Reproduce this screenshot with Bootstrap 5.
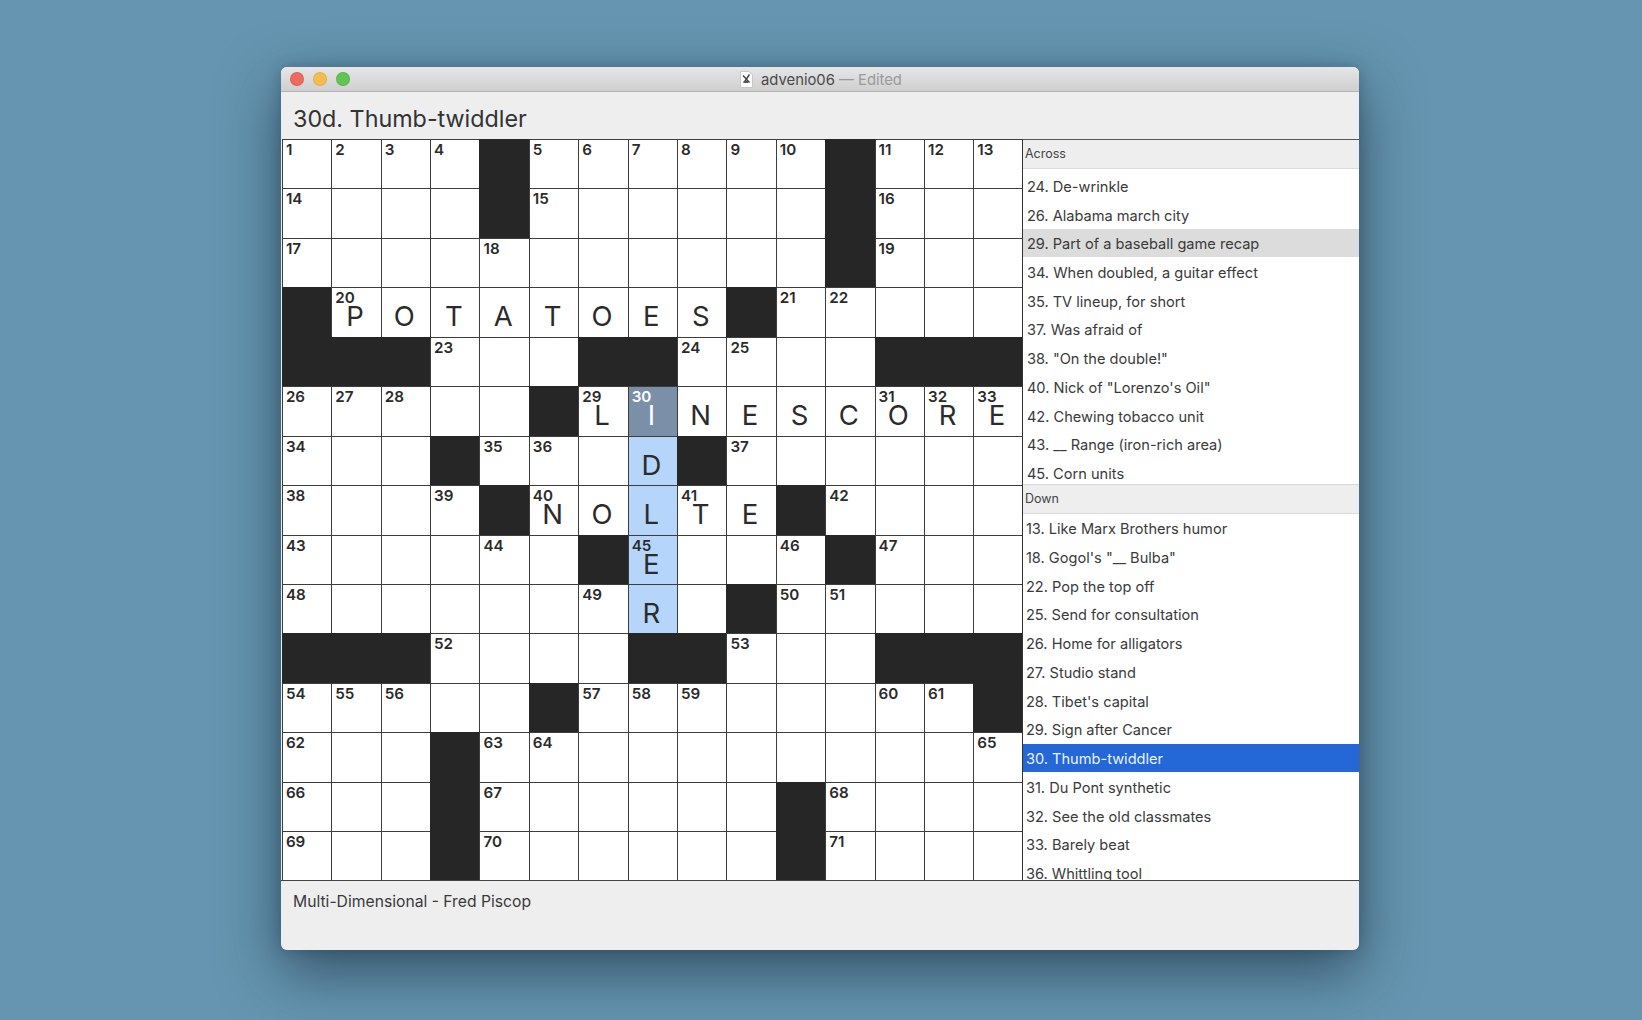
<!DOCTYPE html>
<html lang="en">

<head>
    <meta charset="UTF-8">
    <title>advenio06 - Edited</title>
    <link href="https://cdn.jsdelivr.net/npm/bootstrap@5.3.0/dist/css/bootstrap.min.css" rel="stylesheet">
    <style>
        body {
            background-color: #6595b0;
            height: 1020px;
            overflow: hidden;
            font-family: Inter, "Liberation Sans", sans-serif;
            color: #333;
            padding: 67px 283px 0 281px;
        }

        .app-window {
            height: 883px;
            background: #eeeeef;
            border-radius: 6px;
            overflow: hidden;
        }

        .window-frame {
            border-radius: 6px;
            box-shadow: 0 22px 60px rgba(20, 35, 50, 0.6), 0 0 14px rgba(20, 35, 50, 0.25);
        }

        .title-bar {
            height: 25px;
            padding: 1px 0 0 2px;
            background: linear-gradient(#e6e6e6, #cfcfcf);
            border-bottom: 1px solid #b4b4b4;
            font-size: 14.8px;
            line-height: 24px;
            color: #4a4a4a;
            flex: none;
        }

        .light {
            width: 14px;
            height: 14px;
            border-radius: 50%;
            border: 1px solid rgba(0, 0, 0, 0.08);
        }

        .light-red { background: #ee6a5f; }
        .light-yellow { background: #f5bd4f; }
        .light-green { background: #61c454; }

        .traffic {
            left: 9px;
            top: 5px;
            gap: 9px;
        }

        .edited { color: #9a9a9a; }

        .clue-title {
            height: 47px;
            padding: 10px 0 0 12px;
            font-size: 23.3px;
            line-height: 34px;
            color: #333;
            flex: none;
        }

        .main-area {
            height: 742px;
            border-bottom: 1px solid #444;
            flex: none;
            overflow: hidden;
        }

        .puzzle-grid {
            width: 740px;
            height: 741px;
            margin-left: 0.9px;
            display: grid;
            grid-template-columns: repeat(15, 49.4px);
            grid-template-rows: repeat(15, 49.45px);
            flex: none;
        }

        .cell {
            position: relative;
            min-width: 0;
            min-height: 0;
            border-left: 1px solid #3d3d3d;
            border-top: 1px solid #3d3d3d;
            background: #fff;
            text-align: center;
            font-size: 27.5px;
            line-height: 48px;
            padding: 4px 3px 0 0;
            color: #2b2b2b;
        }

        .cell-black { background: #262626; border-color: #262626; }
        .cell-word { background: #b5d5fb; }
        .cell-active { background: #7b8fa8; color: #fff; }

        .cell-num {
            position: absolute;
            left: 3px;
            top: 0;
            font-size: 15.2px;
            line-height: 20px;
            font-weight: 600;
            color: #2b2b2b;
        }

        .cell-active .cell-num { color: #fff; }

        .side-panel {
            position: relative;
            width: 337px;
            flex: none;
            background: #fff;
            border-left: 1px solid #333;
            border-top: 1px solid #555;
        }

        .list-head {
            height: 29px;
            background: #eeeeee;
            border-bottom: 1px solid #dcdcdc;
            font-size: 12.5px;
            line-height: 28px;
            padding-left: 2px;
            color: #444;
        }

        .across-list {
            height: 316px;
            padding-top: 3px;
            overflow: hidden;
            border-bottom: 1px solid #d8d8d8;
        }

        .across-list .clue-row {
            padding-left: 4px;
            margin-bottom: 1.2px;
        }

        .down-list {
            height: 366px;
            overflow: hidden;
        }

        .clue-row {
            height: 27.5px;
            margin-bottom: 1.25px;
            font-size: 14.6px;
            line-height: 31px;
            padding-left: 3px;
            color: #3a3a3a;
            white-space: nowrap;
        }

        .clue-hover { background: #dcdcdc; }
        .clue-selected { background: #2468d8; color: #eaf2ff; }

        .byline {
            padding: 10px 0 0 12px;
            font-size: 15.7px;
            line-height: 22px;
            color: #3a3a3a;
        }
    </style>
</head>

<body>

    <div class="window-frame">
        <div class="app-window d-flex flex-column">

            <!-- Title bar -->
            <div class="title-bar position-relative d-flex justify-content-center align-items-center gap-1">
                <div class="traffic position-absolute d-flex">
                    <span class="light light-red"></span>
                    <span class="light light-yellow"></span>
                    <span class="light light-green"></span>
                </div>
                <svg width="13" height="17" viewBox="0 0 13 17">
                    <path d="M0.5 0.5H9L12.5 4V16.5H0.5Z" fill="#fff" stroke="#c8c8c8" />
                    <path d="M3 4.5L9.5 11.5M9.5 3.5L4 11.5" stroke="#444" stroke-width="1.4" />
                    <path d="M3.5 10H8V12H3.5Z" fill="#555" />
                </svg>
                <span class="ms-1">advenio06 <span class="edited">— Edited</span></span>
            </div>

            <!-- Current clue -->
            <div class="clue-title">30d. Thumb-twiddler</div>

            <!-- Grid and clue lists -->
            <div class="main-area d-flex">
                <div class="puzzle-grid" id="puzzleGrid"></div>
                <div class="side-panel">
                    <div class="list-head">Across</div>
                    <div class="across-list" id="acrossList"></div>
                    <div class="list-head">Down</div>
                    <div class="down-list" id="downList"></div>
                </div>
            </div>

            <div class="byline">Multi-Dimensional - Fred Piscop</div>
        </div>
    </div>

    <script src="https://cdn.jsdelivr.net/npm/bootstrap@5.3.0/dist/js/bootstrap.bundle.min.js"></script>
    <script>
        // # black, . empty, letters are filled in answers
        const rows = [
            '....#......#...',
            '....#......#...',
            '...........#...',
            '#POTATOES#.....',
            '###...##....###',
            '.....#LINESCORE',
            '...#...D#......',
            '....#NOLTE#....',
            '......#E...#...',
            '.......R.#.....',
            '###....##...###',
            '.....#........#',
            '...#...........',
            '...#......#....',
            '...#......#....'
        ];

        // number of each numbered cell, by "row,col"
        const numbers = {
            '0,0': 1, '0,1': 2, '0,2': 3, '0,3': 4, '0,5': 5, '0,6': 6, '0,7': 7, '0,8': 8, '0,9': 9, '0,10': 10,
            '0,12': 11, '0,13': 12, '0,14': 13, '1,0': 14, '1,5': 15, '1,12': 16, '2,0': 17, '2,4': 18, '2,12': 19,
            '3,1': 20, '3,10': 21, '3,11': 22, '4,3': 23, '4,8': 24, '4,9': 25, '5,0': 26, '5,1': 27, '5,2': 28,
            '5,6': 29, '5,7': 30, '5,12': 31, '5,13': 32, '5,14': 33, '6,0': 34, '6,4': 35, '6,5': 36, '6,9': 37,
            '7,0': 38, '7,3': 39, '7,5': 40, '7,8': 41, '7,11': 42, '8,0': 43, '8,4': 44, '8,7': 45, '8,10': 46,
            '8,12': 47, '9,0': 48, '9,6': 49, '9,10': 50, '9,11': 51, '10,3': 52, '10,9': 53, '11,0': 54, '11,1': 55,
            '11,2': 56, '11,6': 57, '11,7': 58, '11,8': 59, '11,12': 60, '11,13': 61, '12,0': 62, '12,4': 63,
            '12,5': 64, '12,14': 65, '13,0': 66, '13,4': 67, '13,11': 68, '14,0': 69, '14,4': 70, '14,11': 71
        };

        const acrossClues = [
            '24. De-wrinkle', '26. Alabama march city', '29. Part of a baseball game recap',
            '34. When doubled, a guitar effect', '35. TV lineup, for short', '37. Was afraid of',
            '38. "On the double!"', '40. Nick of "Lorenzo\'s Oil"', '42. Chewing tobacco unit',
            '43. __ Range (iron-rich area)', '45. Corn units'
        ];

        const downClues = [
            '13. Like Marx Brothers humor', '18. Gogol\'s "__ Bulba"', '22. Pop the top off',
            '25. Send for consultation', '26. Home for alligators', '27. Studio stand', '28. Tibet\'s capital',
            '29. Sign after Cancer', '30. Thumb-twiddler', '31. Du Pont synthetic', '32. See the old classmates',
            '33. Barely beat', '36. Whittling tool'
        ];

        const grid = document.getElementById('puzzleGrid');
        rows.forEach((row, r) => {
            [...row].forEach((ch, c) => {
                const cell = document.createElement('div');
                cell.className = 'cell';
                if (ch === '#') {
                    cell.classList.add('cell-black');
                } else {
                    if (ch !== '.') cell.textContent = ch;
                    if (c === 7 && r >= 5 && r <= 9) cell.classList.add(r === 5 ? 'cell-active' : 'cell-word');
                    const num = numbers[r + ',' + c];
                    if (num) {
                        const tag = document.createElement('span');
                        tag.className = 'cell-num';
                        tag.textContent = num;
                        cell.appendChild(tag);
                    }
                }
                grid.appendChild(cell);
            });
        });

        function fillList(id, clues) {
            const list = document.getElementById(id);
            clues.forEach(text => {
                const row = document.createElement('div');
                row.className = 'clue-row';
                if (text.startsWith('29. Part')) row.classList.add('clue-hover');
                if (text.startsWith('30. ')) row.classList.add('clue-selected');
                row.textContent = text;
                list.appendChild(row);
            });
        }

        fillList('acrossList', acrossClues);
        fillList('downList', downClues);
    </script>

</body>

</html>
